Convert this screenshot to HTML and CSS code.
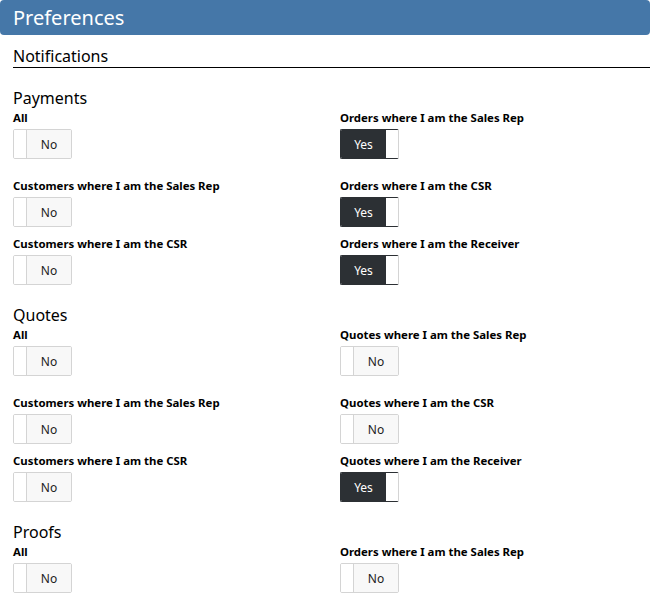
FILE: index.html
```html
<!DOCTYPE html>
<html lang="en">
<head>
  <meta charset="UTF-8">
  <meta name="viewport" content="width=device-width, initial-scale=1.0">
  <title>Preferences</title>
  <link rel="stylesheet" href="styles.css">
</head>
<body>
  <div class="page-header">Preferences</div>

  <div class="content">
    <h2 class="group-title">Notifications</h2>

    <div class="section">
      <h3>Payments</h3>
      <div class="fields">
        <div class="field">
          <label>All</label>
          <div class="toggle off"><span class="knob"></span><span class="state">No</span></div>
        </div>
        <div class="field">
          <label>Orders where I am the Sales Rep</label>
          <div class="toggle on"><span class="state">Yes</span><span class="knob"></span></div>
        </div>
        <div class="field">
          <label>Customers where I am the Sales Rep</label>
          <div class="toggle off"><span class="knob"></span><span class="state">No</span></div>
        </div>
        <div class="field">
          <label>Orders where I am the CSR</label>
          <div class="toggle on"><span class="state">Yes</span><span class="knob"></span></div>
        </div>
        <div class="field">
          <label>Customers where I am the CSR</label>
          <div class="toggle off"><span class="knob"></span><span class="state">No</span></div>
        </div>
        <div class="field">
          <label>Orders where I am the Receiver</label>
          <div class="toggle on"><span class="state">Yes</span><span class="knob"></span></div>
        </div>
      </div>
    </div>

    <div class="section">
      <h3>Quotes</h3>
      <div class="fields">
        <div class="field">
          <label>All</label>
          <div class="toggle off"><span class="knob"></span><span class="state">No</span></div>
        </div>
        <div class="field">
          <label>Quotes where I am the Sales Rep</label>
          <div class="toggle off"><span class="knob"></span><span class="state">No</span></div>
        </div>
        <div class="field">
          <label>Customers where I am the Sales Rep</label>
          <div class="toggle off"><span class="knob"></span><span class="state">No</span></div>
        </div>
        <div class="field">
          <label>Quotes where I am the CSR</label>
          <div class="toggle off"><span class="knob"></span><span class="state">No</span></div>
        </div>
        <div class="field">
          <label>Customers where I am the CSR</label>
          <div class="toggle off"><span class="knob"></span><span class="state">No</span></div>
        </div>
        <div class="field">
          <label>Quotes where I am the Receiver</label>
          <div class="toggle on"><span class="state">Yes</span><span class="knob"></span></div>
        </div>
      </div>
    </div>

    <div class="section">
      <h3>Proofs</h3>
      <div class="fields">
        <div class="field">
          <label>All</label>
          <div class="toggle off"><span class="knob"></span><span class="state">No</span></div>
        </div>
        <div class="field">
          <label>Orders where I am the Sales Rep</label>
          <div class="toggle off"><span class="knob"></span><span class="state">No</span></div>
        </div>
      </div>
    </div>
  </div>
</body>
</html>
```

FILE: styles.css
```css
body {
  margin: 0;
  font-family: "Noto Sans", "Open Sans", sans-serif;
  color: #000;
  background: #fff;
}
.page-header {
  height: 35px;
  line-height: 36px;
  padding: 0 13px;
  background-color: #4577a8;
  color: #fff;
  font-size: 20px;
  border-radius: 4px;
}
.content {
  padding-left: 13px;
}
.group-title {
  margin: 10px 0 0;
  font-size: 16px;
  font-weight: normal;
  line-height: 22px;
  border-bottom: 1px solid #000;
}
.section {
  margin-top: 19px;
}
.section h3 {
  margin: 0 0 1px;
  font-size: 16px;
  font-weight: normal;
  line-height: 22px;
}
.fields {
  display: grid;
  grid-template-columns: 327px 1fr;
  row-gap: 9px;
}
.field:nth-child(-n+2) {
  margin-bottom: 10px;
}
.field label {
  display: block;
  font-size: 11.4px;
  font-weight: bold;
  line-height: 16px;
}
.toggle {
  display: flex;
  width: 59px;
  height: 30px;
  margin-top: 3px;
  box-sizing: border-box;
  border: 1px solid #d4d4d4;
  border-radius: 2px;
  font-size: 12px;
  overflow: hidden;
}
.toggle .knob {
  width: 12px;
  background: #fff;
}
.toggle .state {
  flex: 1;
  display: flex;
  align-items: center;
  justify-content: center;
}
.toggle.off .knob {
  border-right: 1px solid #d4d4d4;
}
.toggle.off .state {
  background: #f8f8f8;
  color: #222;
}
.toggle.on {
  border-color: #2c3034;
  border-right-color: #d4d4d4;
}
.toggle.on .state {
  background: #2c3034;
  color: #fff;
}
.toggle.on .knob {
  border-top: 1px solid #d4d4d4;
  border-bottom: 1px solid #d4d4d4;
  margin: -1px 0;
}
```
